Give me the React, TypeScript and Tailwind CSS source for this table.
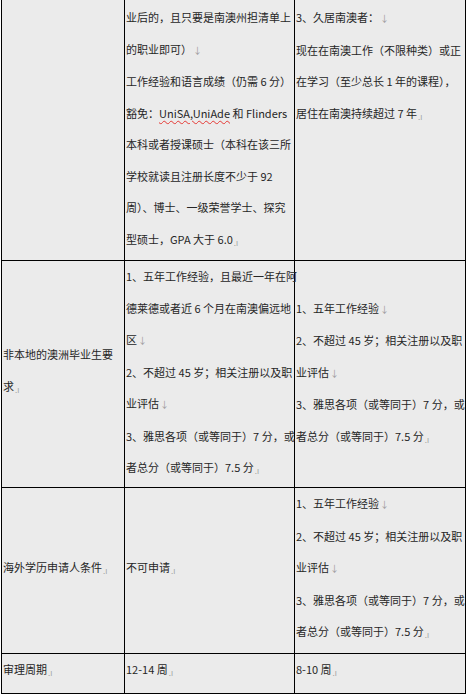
import type { ReactNode } from 'react';

// 表格中 Word 风格的换行标记和单元格结束标记
const Br = () => <span className="ml-[1px] text-[9px] text-[#9a9a9a]">↓</span>;
const End = () => <span className="ml-[1px] text-[8px] text-[#a0a0a0] align-[-2px]">.ı</span>;

type Line = ReactNode;

function Lines({ lines }: { lines: Line[] }) {
  return (
    <div>
      {lines.map((line, i) => (
        <div key={i} className="whitespace-nowrap">
          {line}
        </div>
      ))}
    </div>
  );
}

const requirementLines: Line[] = [
  <>1、五年工作经验<Br /></>,
  '2、不超过 45 岁；相关注册以及职',
  <>业评估<Br /></>,
  '3、雅思各项（或等同于）7 分，或',
  <>者总分（或等同于）7.5 分<End /></>,
];

export default function App() {
  return (
    <div
      className="h-[696px] w-[467px] bg-white text-[11px] leading-[31.5px] text-[#262626]"
      style={{ fontFamily: '"Noto Sans CJK SC", "Noto Sans", sans-serif' }}
    >
      <div className="ml-[1px] w-[465px] border-x border-black bg-[#ebebeb]">
        {/* 第一行：延续上页内容 */}
        <div className="grid h-[261px] grid-cols-[123px_170px_170px] border-b border-black">
          <div className="border-r border-black" />
          <div className="border-r border-black pl-[1px] pt-[2px]">
            <Lines
              lines={[
                '业后的，且只要是南澳州担清单上',
                <>的职业即可）<Br /></>,
                '工作经验和语言成绩（仍需 6 分）',
                <>
                  豁免：
                  <span className="underline decoration-[#e53935] decoration-wavy decoration-1 underline-offset-2">
                    UniSA,UniAde
                  </span>{' '}
                  和 Flinders
                </>,
                '本科或者授课硕士（本科在该三所',
                '学校就读且注册长度不少于 92',
                '周）、博士、一级荣誉学士、探究',
                <>型硕士，GPA 大于 6.0<End /></>,
              ]}
            />
          </div>
          <div className="pl-[1px] pt-[2px]">
            <Lines
              lines={[
                <>3、久居南澳者：<Br /></>,
                '现在在南澳工作（不限种类）或正',
                '在学习（至少总长 1 年的课程），',
                <>居住在南澳持续超过 7 年<End /></>,
              ]}
            />
          </div>
        </div>

        {/* 非本地的澳洲毕业生 */}
        <div className="grid h-[227px] grid-cols-[123px_170px_170px] border-b border-black">
          <div className="flex flex-col justify-center border-r border-black pl-[1px] pb-[6px]">
            <Lines lines={['非本地的澳洲毕业生要', <>求<End /></>]} />
          </div>
          <div className="flex flex-col justify-center border-r border-black pl-[1px] pb-[3px]">
            <Lines
              lines={[
                '1、五年工作经验，且最近一年在阿',
                '德莱德或者近 6 个月在南澳偏远地',
                <>区<Br /></>,
                '2、不超过 45 岁；相关注册以及职',
                <>业评估<Br /></>,
                '3、雅思各项（或等同于）7 分，或',
                <>者总分（或等同于）7.5 分<End /></>,
              ]}
            />
          </div>
          <div className="flex flex-col justify-center pl-[1px] pb-[3px]">
            <Lines lines={requirementLines} />
          </div>
        </div>

        {/* 海外学历申请人 */}
        <div className="grid h-[166px] grid-cols-[123px_170px_170px] border-b border-black">
          <div className="flex flex-col justify-center border-r border-black pl-[1px] pb-[4px]">
            <Lines lines={[<>海外学历申请人条件<End /></>]} />
          </div>
          <div className="flex flex-col justify-center border-r border-black pl-[1px] pb-[4px]">
            <Lines lines={[<>不可申请<End /></>]} />
          </div>
          <div className="flex flex-col justify-center pl-[1px] pb-[4px]">
            <Lines lines={requirementLines} />
          </div>
        </div>

        {/* 审理周期 */}
        <div className="grid h-[40px] grid-cols-[123px_170px_170px] border-b border-black">
          <div className="flex flex-col justify-center border-r border-black pl-[1px] pb-[4px]">
            <Lines lines={[<>审理周期<End /></>]} />
          </div>
          <div className="flex flex-col justify-center border-r border-black pl-[1px] pb-[4px]">
            <Lines lines={[<>12-14 周<End /></>]} />
          </div>
          <div className="flex flex-col justify-center pl-[1px] pb-[4px]">
            <Lines lines={[<>8-10 周<End /></>]} />
          </div>
        </div>
      </div>
    </div>
  );
}
